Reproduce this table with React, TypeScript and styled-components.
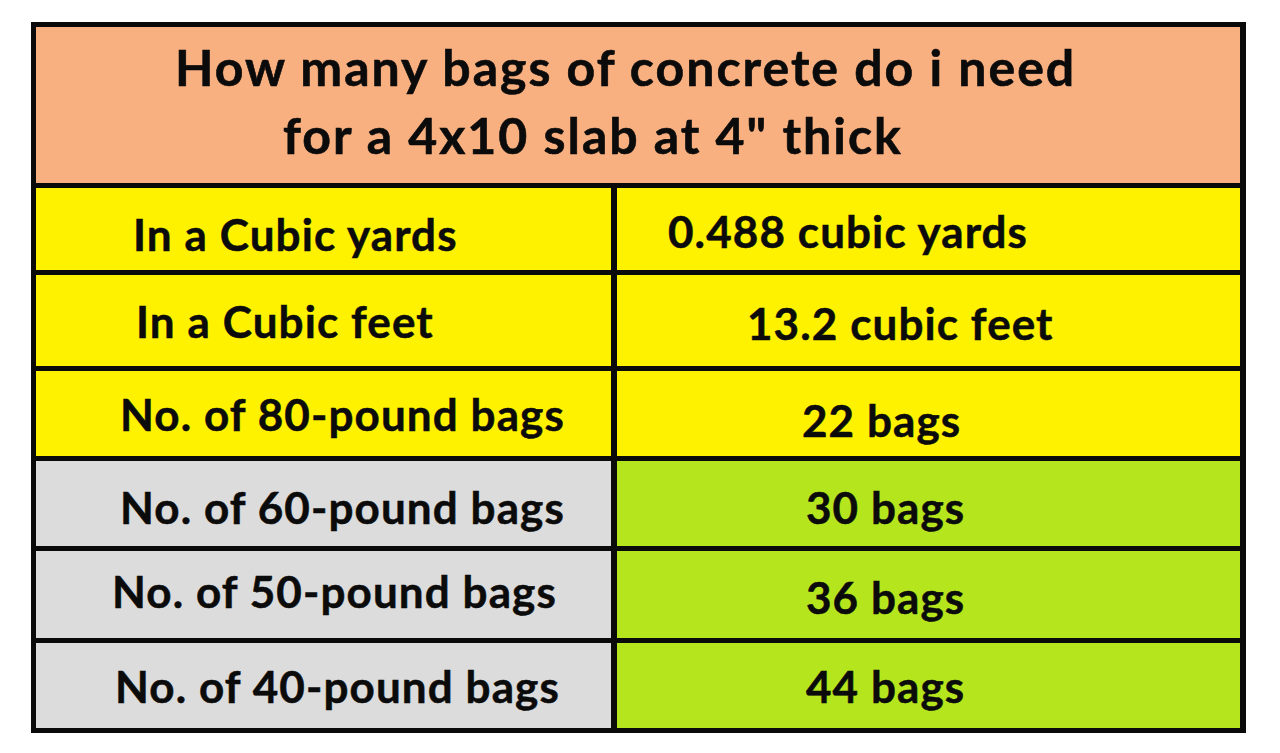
import React from "react";
import styled, { createGlobalStyle } from "styled-components";

const Global = createGlobalStyle`
  html, body { margin: 0; padding: 0; background: #ffffff; }
  body { font-family: Lato, "Open Sans", "Noto Sans", sans-serif; }
`;

const Page = styled.div`
  width: 1280px;
  height: 753px;
  padding: 22px 0 0 31px;
  box-sizing: border-box;
`;

const Table = styled.div`
  width: 1215px;
  box-sizing: border-box;
  background: #0a0a0a;
  padding: 5px 6px 5px 5px;
  display: grid;
  grid-template-columns: 575px 623px;
  column-gap: 6px;
  row-gap: 5px;
`;

const Header = styled.div`
  grid-column: 1 / span 2;
  height: 156px;
  background: #f9b081;
  display: flex;
  flex-direction: column;
  justify-content: center;
  box-sizing: border-box;
  padding-bottom: 8px;
`;

const HeaderLine = styled.div<{ $indent: number }>`
  padding-left: ${(p) => p.$indent}px;
  font-size: 50px;
  font-weight: 700;
  letter-spacing: 2px;
  line-height: 68px;
  color: #0b0b0b;
  -webkit-text-stroke: 0.6px #0b0b0b;
  white-space: nowrap;
`;

const Cell = styled.div<{ $bg: string; $h: number; $indent: number; $shift?: number }>`
  height: ${(p) => p.$h}px;
  background: ${(p) => p.$bg};
  display: flex;
  align-items: center;
  box-sizing: border-box;
  padding-left: ${(p) => p.$indent}px;
  padding-top: ${(p) => Math.max(0, (p.$shift ?? 0) * 2)}px;
  padding-bottom: ${(p) => Math.max(0, -(p.$shift ?? 0) * 2)}px;
  font-size: 44px;
  font-weight: 700;
  letter-spacing: 1.1px;
  color: #0b0b0b;
  -webkit-text-stroke: 0.5px #0b0b0b;
  white-space: nowrap;
`;

const YELLOW = "#fff200";
const GRAY = "#dcdcdc";
const GREEN = "#b5e61d";

type Row = {
  h: number;
  label: string;
  value: string;
  lbg: string;
  rbg: string;
  li: number;
  ri: number;
  ls?: number;
  rs?: number;
};

const rows: Row[] = [
  { h: 82, label: "In a Cubic yards", value: "0.488 cubic yards", lbg: YELLOW, rbg: YELLOW, li: 97, ri: 51, ls: 5, rs: 2 },
  { h: 91, label: "In a Cubic feet", value: "13.2 cubic feet", lbg: YELLOW, rbg: YELLOW, li: 100, ri: 130, ls: 0, rs: 2 },
  { h: 85, label: "No. of 80-pound bags", value: "22 bags", lbg: YELLOW, rbg: YELLOW, li: 84, ri: 185, ls: 0, rs: 6 },
  { h: 85, label: "No. of 60-pound bags", value: "30 bags", lbg: GRAY, rbg: GREEN, li: 84, ri: 189, ls: 3, rs: 3 },
  { h: 87, label: "No. of 50-pound bags", value: "36 bags", lbg: GRAY, rbg: GREEN, li: 76, ri: 189, ls: -4, rs: 2 },
  { h: 85, label: "No. of 40-pound bags", value: "44 bags", lbg: GRAY, rbg: GREEN, li: 79, ri: 189, ls: 0, rs: 0 },
];

export default function App() {
  return (
    <>
      <Global />
      <Page>
        <Table>
          <Header>
            <HeaderLine $indent={139}>How many bags of concrete do i need</HeaderLine>
            <HeaderLine $indent={247}>for a 4x10 slab at 4" thick</HeaderLine>
          </Header>
          {rows.map((r) => (
            <React.Fragment key={r.label}>
              <Cell $bg={r.lbg} $h={r.h} $indent={r.li} $shift={r.ls}>
                {r.label}
              </Cell>
              <Cell $bg={r.rbg} $h={r.h} $indent={r.ri} $shift={r.rs}>
                {r.value}
              </Cell>
            </React.Fragment>
          ))}
        </Table>
      </Page>
    </>
  );
}
